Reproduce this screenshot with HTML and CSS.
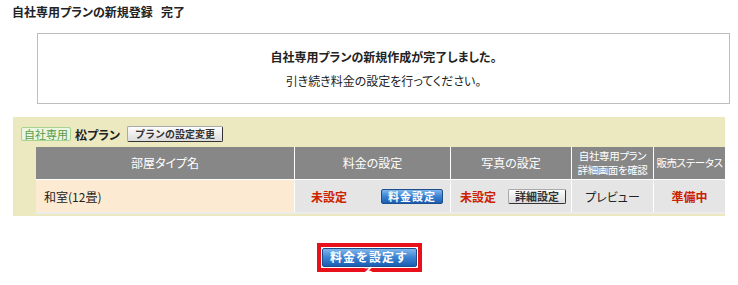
FILE: index.html
```html
<!DOCTYPE html>
<html lang="ja">
<head>
    <meta charset="UTF-8">
    <title>自社専用プランの新規登録 完了</title>
    <link rel="stylesheet" href="styles.css">
</head>
<body>
    <h1 class="page-title">自社専用プランの新規登録&nbsp;&nbsp;&nbsp;完了</h1>

    <div class="notice">
        <p class="notice-main">自社専用プランの新規作成が完了しました。</p>
        <p class="notice-sub">引き続き料金の設定を行ってください。</p>
    </div>

    <div class="plan">
        <div class="plan-head">
            <span class="tag">自社専用</span>
            <span class="plan-name">松プラン</span>
            <button class="btn-gray btn-plan">プランの設定変更</button>
        </div>
        <table class="rooms">
            <thead>
                <tr>
                    <th class="col-name">部屋タイプ名</th>
                    <th class="col-price">料金の設定</th>
                    <th class="col-photo">写真の設定</th>
                    <th class="col-preview tight">自社専用プラン<br>詳細画面を確認</th>
                    <th class="col-status tight">販売ステータス</th>
                </tr>
            </thead>
            <tbody>
                <tr>
                    <td class="room-name">和室(12畳)</td>
                    <td>
                        <div class="cell-split">
                            <span class="unset">未設定</span>
                            <button class="btn-blue">料金設定</button>
                        </div>
                    </td>
                    <td>
                        <div class="cell-split">
                            <span class="unset">未設定</span>
                            <button class="btn-gray">詳細設定</button>
                        </div>
                    </td>
                    <td class="center">プレビュー</td>
                    <td class="center"><span class="unset">準備中</span></td>
                </tr>
            </tbody>
        </table>
    </div>

    <div class="actions">
        <div class="highlight">
            <button class="btn-blue btn-big">料金を設定する</button>
        </div>
    </div>
</body>
</html>
```

FILE: styles.css
```css
body {
    margin: 0;
    font-family: "Noto Sans CJK JP", "DejaVu Sans", sans-serif;
    font-size: 12px;
    color: #222;
    background: #fff;
    font-feature-settings: "palt";
}

.page-title {
    margin: 0;
    padding: 4px 12px;
    font-size: 12px;
    font-weight: bold;
    line-height: 16px;
}

.notice {
    margin: 9px 0 0 37px;
    width: 691px;
    height: 69px;
    border: 1px solid #bdbdbd;
    text-align: center;
}

.notice p {
    margin: 0;
    line-height: 16px;
}

.notice-main {
    padding-top: 15px;
    font-weight: bold;
}

.notice-sub {
    padding-top: 8px;
}

.plan {
    margin: 13px 0 0 13px;
    width: 712px;
    background: #ece8c0;
    padding: 9px 0 2px 0;
}

.plan-head {
    display: flex;
    align-items: center;
    padding-left: 8px;
    height: 16px;
}

.tag {
    display: inline-block;
    border: 1px solid #a6d48e;
    background: #eaf6df;
    color: #5a9a4a;
    font-size: 11px;
    line-height: 12px;
    padding: 0 2px;
    border-radius: 2px;
}

.plan-name {
    font-weight: bold;
    margin-left: 4px;
}

.btn-gray {
    font-family: inherit;
    font-size: 11px;
    font-weight: bold;
    color: #333;
    background: linear-gradient(#fdfdfd, #dcdcdc);
    border: 1px solid #aaa;
    border-right-color: #333;
    border-bottom-color: #333;
    border-radius: 2px;
    height: 15px;
    line-height: 12px;
    padding: 0 6px;
    cursor: pointer;
}

.btn-plan {
    margin-left: 7px;
    font-size: 10px;
    padding: 0 7px;
    height: 16px;
}

.btn-blue {
    font-family: inherit;
    font-size: 11px;
    font-weight: bold;
    color: #fff;
    background: linear-gradient(#7fb6ec, #3c82d2 50%, #1b5eb2);
    border: 1px solid #1d4f8c;
    border-radius: 2px;
    height: 15px;
    line-height: 12px;
    padding: 0 6px;
    letter-spacing: 1px;
    cursor: pointer;
}

.rooms {
    margin: 5px 0 0 23px;
    width: 689px;
    border-collapse: collapse;
    table-layout: fixed;
}

.rooms th {
    background: #878787;
    color: #fff;
    font-weight: normal;
    height: 32px;
    padding: 0;
    line-height: 14px;
    border: 1px solid #fff;
    border-top: none;
    white-space: nowrap;
    overflow: hidden;
}

.rooms th.tight {
    font-size: 10.5px;
    letter-spacing: -0.4px;
}

.rooms th:first-child,
.rooms td:first-child {
    border-left: none;
}

.rooms th:last-child,
.rooms td:last-child {
    border-right: none;
}

.col-name { width: 258px; }
.col-price { width: 155px; }
.col-photo { width: 120px; }
.col-preview { width: 81px; }

.rooms td {
    background: #e5e5e5;
    height: 32px;
    padding: 0;
    border: 1px solid #fff;
    border-bottom: 2px solid #ececec;
}

.rooms td.room-name {
    background: #fcebd2;
    padding-left: 8px;
}

.cell-split {
    display: flex;
    align-items: center;
    justify-content: space-between;
    padding: 0 7px 0 16px;
}

.rooms td:nth-child(3) .cell-split {
    padding: 0 5px 0 9px;
}

.center {
    text-align: center;
}

.unset {
    color: #cc2200;
    font-weight: bold;
}

.actions {
    display: flex;
    justify-content: center;
    padding: 27px 0 0 0;
}

.highlight {
    border: 4px solid #e8101a;
    padding: 1px;
    display: flex;
}

.btn-big {
    height: 19px;
    width: 95px;
    font-size: 12px;
    line-height: 15px;
}
```
